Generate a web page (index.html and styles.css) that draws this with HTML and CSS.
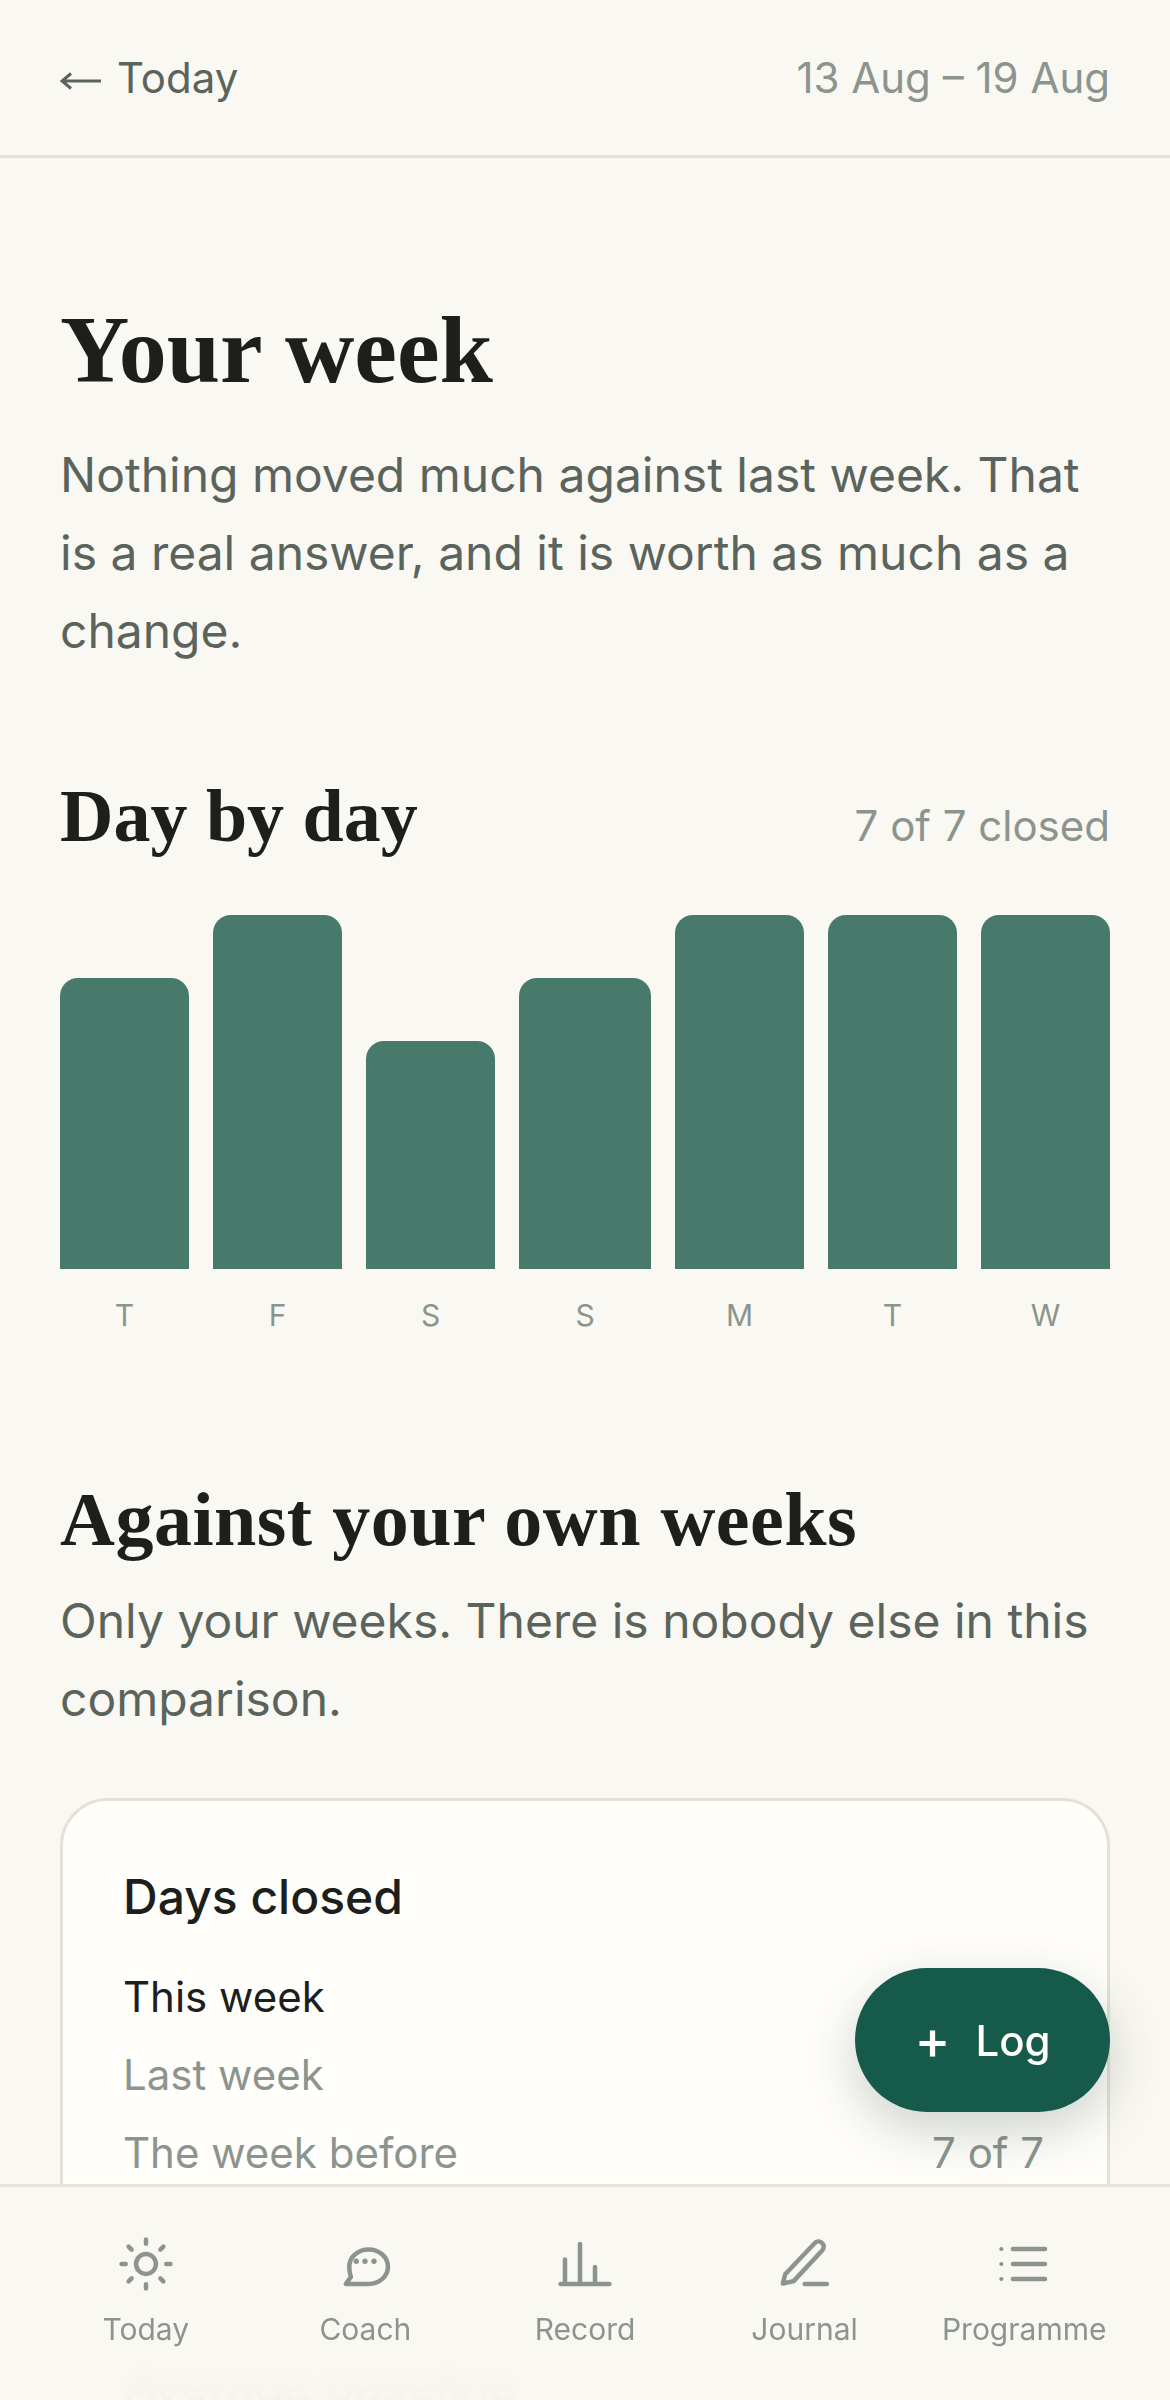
FILE: index.html
```html
<!DOCTYPE html>
<html lang="en">

<head>
    <meta charset="UTF-8">
    <meta name="viewport" content="width=device-width, initial-scale=1.0">
    <title>Your week</title>
    <link rel="stylesheet" href="styles.css">
</head>

<body>
    <header class="topbar">
        <a class="back-link">
            <svg class="back-arrow" viewBox="0 0 42 18">
                <path d="M41 9H2M11 1.5L2 9L11 16.5" />
            </svg>
            <span>Today</span>
        </a>
        <span class="week-range">13 Aug – 19 Aug</span>
    </header>

    <main class="page">
        <h1>Your week</h1>
        <p class="lead">Nothing moved much against last week. That is a real answer, and it is worth as much as a change.</p>

        <section class="days">
            <div class="section-head">
                <h2>Day by day</h2>
                <span class="section-note">7 of 7 closed</span>
            </div>
            <div class="chart">
                <div class="chart-col"><div class="bar bar-mid"></div><span class="bar-label">T</span></div>
                <div class="chart-col"><div class="bar bar-full"></div><span class="bar-label">F</span></div>
                <div class="chart-col"><div class="bar bar-low"></div><span class="bar-label">S</span></div>
                <div class="chart-col"><div class="bar bar-mid"></div><span class="bar-label">S</span></div>
                <div class="chart-col"><div class="bar bar-full"></div><span class="bar-label">M</span></div>
                <div class="chart-col"><div class="bar bar-full"></div><span class="bar-label">T</span></div>
                <div class="chart-col"><div class="bar bar-full"></div><span class="bar-label">W</span></div>
            </div>
        </section>

        <section class="compare">
            <h2>Against your own weeks</h2>
            <p class="compare-lead">Only your weeks. There is nobody else in this comparison.</p>

            <div class="card">
                <h3>Days closed</h3>
                <div class="row row-current"><span>This week</span></div>
                <div class="row"><span>Last week</span></div>
                <div class="row"><span>The week before</span><span>7 of 7</span></div>

                <h3 class="card-second">Average baseline</h3>
            </div>
        </section>
    </main>

    <button class="log-button"><span class="log-plus">+</span><span>Log</span></button>

    <nav class="tabbar">
        <a class="tab">
            <svg class="tab-icon" viewBox="0 0 24 24">
                <circle cx="12" cy="12" r="3.3" />
                <path d="M12 3.85v1.4M12 18.75v1.4M3.85 12h1.4M18.75 12h1.4M6.2 6.2l1 1M16.8 16.8l1 1M6.2 17.8l1-1M16.8 7.2l1-1" />
            </svg>
            <span>Today</span>
        </a>
        <a class="tab">
            <svg class="tab-icon" viewBox="0 0 24 24">
                <path d="M5.6 18.65H13.2C16.8 18.65 19.65 16.1 19.65 12.9C19.65 9.7 16.8 7.15 13.2 7.15C9.6 7.15 6.75 9.7 6.75 12.9C6.75 14.2 7 15.4 7.3 16.3Z" />
                <circle class="dot" cx="9.1" cy="11.1" r="0.9" />
                <circle class="dot" cx="12" cy="11.1" r="0.9" />
                <circle class="dot" cx="15" cy="11.1" r="0.9" />
            </svg>
            <span>Coach</span>
        </a>
        <a class="tab">
            <svg class="tab-icon" viewBox="0 0 24 24">
                <path d="M3.85 18.67H20.15M5.33 18.67V10.5M10.33 18.67V5.3M15.33 18.67V13" />
            </svg>
            <span>Record</span>
        </a>
        <a class="tab">
            <svg class="tab-icon" viewBox="0 0 24 24">
                <path d="M4.6 18.5L5.4 15.4L15.2 5.1A1.7 1.7 0 0 1 17.8 7.4L8.2 17.7ZM11.9 18.7H19.3" />
            </svg>
            <span>Journal</span>
        </a>
        <a class="tab">
            <svg class="tab-icon" viewBox="0 0 24 24">
                <path d="M8.3 7H19M8.3 12H19M8.3 17H19" />
                <circle class="dot" cx="4.45" cy="7" r="0.7" />
                <circle class="dot" cx="4.45" cy="12" r="0.7" />
                <circle class="dot" cx="4.45" cy="17" r="0.7" />
            </svg>
            <span>Programme</span>
        </a>
    </nav>
</body>

</html>
```

FILE: styles.css
```css
* {
    box-sizing: border-box;
}

body {
    font-family: 'Inter', sans-serif;
    background-color: #faf8f3;
    color: #1c1f1c;
    margin: 0;
    height: 2400px;
    overflow: hidden;
}

h1,
h2 {
    font-family: 'Liberation Serif', serif;
    font-weight: 700;
    color: #1c1f1c;
    margin: 0;
}

.topbar {
    display: flex;
    justify-content: space-between;
    align-items: center;
    height: 158px;
    padding: 0 60px;
    border-bottom: 3px solid #e5e2d9;
    font-size: 42px;
}

.back-link {
    display: flex;
    align-items: center;
    gap: 15px;
    color: #5a645d;
}

.back-arrow {
    width: 42px;
    height: 18px;
    margin-top: 6px;
    fill: none;
    stroke: #5a645d;
    stroke-width: 3;
}

.week-range {
    color: #8b958d;
}

.page {
    padding: 142px 60px 0;
}

h1 {
    font-size: 96px;
    line-height: 100px;
}

.lead {
    font-size: 48px;
    line-height: 78px;
    color: #5a645d;
    margin: 36px 0 0;
}

.days {
    margin-top: 104px;
}

.section-head {
    display: flex;
    justify-content: space-between;
    align-items: baseline;
}

h2 {
    font-size: 74px;
    line-height: 84px;
}

.section-note {
    font-size: 42px;
    color: #8b958d;
}

.chart {
    display: grid;
    grid-template-columns: 129px 129px 129px 132px 129px 129px 129px;
    column-gap: 24px;
    margin-top: 57px;
}

.chart-col {
    display: flex;
    flex-direction: column;
    justify-content: flex-end;
    height: 354px;
    position: relative;
}

.bar {
    background-color: #487a6c;
    border-radius: 18px 18px 0 0;
}

.bar-full {
    height: 354px;
}

.bar-mid {
    height: 291px;
}

.bar-low {
    height: 228px;
}

.bar-label {
    position: absolute;
    top: 100%;
    left: 0;
    right: 0;
    margin-top: 31px;
    text-align: center;
    font-size: 30px;
    line-height: 30px;
    color: #8b958d;
}

.compare {
    margin-top: 208px;
}

.compare h2 {
    font-size: 76px;
    letter-spacing: 0.5px;
}

.compare-lead {
    font-size: 48px;
    line-height: 78px;
    color: #5a645d;
    margin: 21px 0 0;
}

.card {
    margin-top: 60px;
    padding: 63px 63px 60px 60px;
    background-color: #fffefb;
    border: 3px solid #e3e1d8;
    border-radius: 48px;
}

h3 {
    font-size: 48px;
    line-height: 66px;
    font-weight: 500;
    margin: 0 0 28px;
}

.card-second {
    margin-top: 161px;
}

.row {
    display: flex;
    justify-content: space-between;
    font-size: 42px;
    line-height: 78px;
    color: #8b958d;
}

.row-current {
    color: #1c1f1c;
}

.log-button {
    position: fixed;
    right: 60px;
    top: 1968px;
    width: 255px;
    height: 144px;
    display: flex;
    justify-content: center;
    align-items: center;
    gap: 25px;
    padding: 0;
    border: none;
    border-radius: 72px;
    background-color: #165a4c;
    color: #fffefb;
    font-family: 'Inter', sans-serif;
    font-size: 42px;
    font-weight: 500;
    box-shadow: 0 18px 54px rgba(28, 48, 40, 0.22);
    z-index: 2;
}

.log-plus {
    font-size: 54px;
    line-height: 54px;
}

.tabbar {
    position: fixed;
    left: 0;
    right: 0;
    top: 2184px;
    height: 216px;
    display: grid;
    grid-template-columns: repeat(5, 1fr);
    padding: 41px 36px 0;
    background-color: rgba(250, 248, 243, 0.97);
    backdrop-filter: blur(10px);
    border-top: 3px solid #e5e2d9;
    z-index: 3;
}

.tab {
    display: flex;
    flex-direction: column;
    align-items: center;
    gap: 11px;
    font-size: 30px;
    line-height: 36px;
    color: #8b958d;
}

.tab-icon {
    width: 72px;
    height: 72px;
    fill: none;
    stroke: #8b958d;
    stroke-width: 1.5;
    stroke-linecap: round;
    stroke-linejoin: round;
}

.tab-icon .dot {
    fill: #8b958d;
    stroke: none;
}
```
